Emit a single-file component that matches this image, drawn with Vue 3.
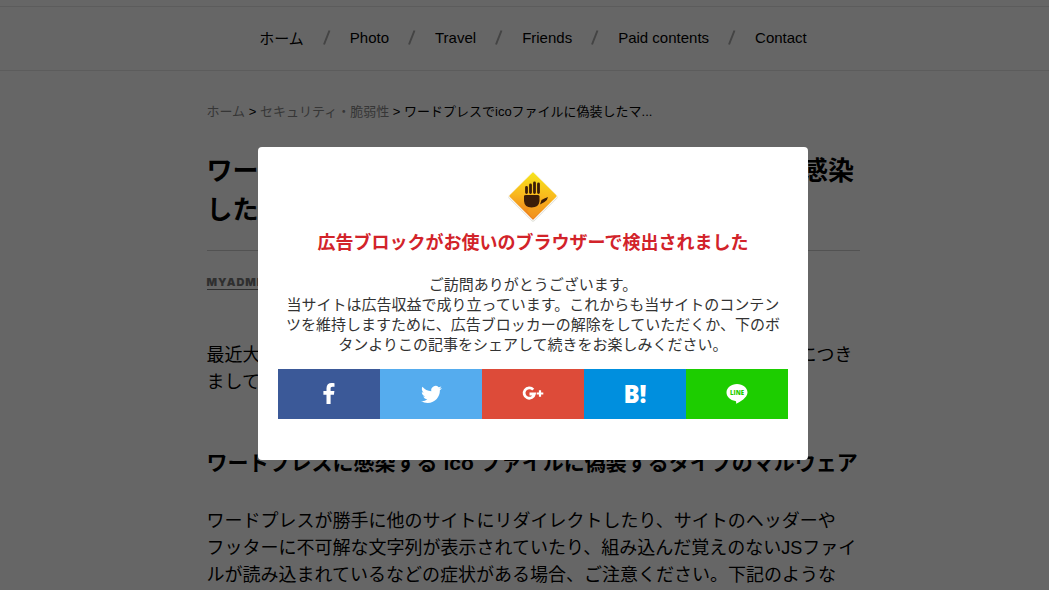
<script setup>
const navItems = ['ホーム', 'Photo', 'Travel', 'Friends', 'Paid contents', 'Contact']
const messageLines = [
  'ご訪問ありがとうございます。',
  '当サイトは広告収益で成り立っています。これからも当サイトのコンテン',
  'ツを維持しますために、広告ブロッカーの解除をしていただくか、下のボ',
  'タンよりこの記事をシェアして続きをお楽しみください。',
]
</script>

<template>
  <div class="page">
    <nav class="site-nav" aria-label="メインメニュー">
      <template v-for="(item, i) in navItems" :key="item">
        <span v-if="i" class="slash" aria-hidden="true">
          <svg width="8" height="15" viewBox="0 0 8 15"><path d="M1 14.5 6.5 .5" stroke="#aaa" stroke-width="2" /></svg>
        </span>
        <a href="#">{{ item }}</a>
      </template>
    </nav>

    <main class="article">
      <div class="breadcrumb">
        <a href="#">ホーム</a> &gt; <a href="#">セキュリティ・脆弱性</a> &gt; ワードプレスでicoファイルに偽装したマ...
      </div>
      <h1>ワードプレスで<span class="latin">ico</span>ファイルに偽装したマルウェア感染<br>した時の対処法</h1>
      <div class="meta"><a href="#">MYADMIN</a></div>
      <p class="lead">最近大きな問題となっているワードプレスマルウェア感染の被害と対処法につき<br>まして、ご紹介します。</p>
      <h2>ワードプレスに感染する<span class="latin">ico</span>ファイルに偽装するタイプのマルウェア</h2>
      <p>ワードプレスが勝手に他のサイトにリダイレクトしたり、サイトのヘッダーや<br>フッターに不可解な文字列が表示されていたり、組み込んだ覚えのないJSファイ<br>ルが読み込まれているなどの症状がある場合、ご注意ください。下記のような</p>
    </main>

    <div class="overlay">
      <section class="modal" role="dialog" aria-modal="true" aria-labelledby="notice-title">
        <svg class="sign" width="54" height="54" viewBox="0 0 54 54" aria-hidden="true">
          <defs>
            <linearGradient id="sign-fill" x1="0.1" y1="0" x2="0.9" y2="1">
              <stop offset="0" stop-color="#f6e11c" />
              <stop offset="0.5" stop-color="#f9b81d" />
              <stop offset="1" stop-color="#ec7a1d" />
            </linearGradient>
          </defs>
          <rect x="9" y="10" width="36" height="36" rx="2" transform="rotate(45 27 28)" fill="#deded6" />
          <rect x="9" y="9" width="36" height="36" rx="2" transform="rotate(45 27 27)" fill="#fbfbf7" />
          <rect x="10" y="10" width="34" height="34" rx="1" transform="rotate(45 27 27)" fill="url(#sign-fill)" />
          <path d="M21 42C26 35 34 31 43 31L46 31 28 49Q27 50 26 49Z" fill="#f5a81d" opacity=".5" />
          <path d="M20.500 18.500V23.500M24.500 16V23.500M28.500 14V23.500M32.500 15V23.500" fill="none" stroke="#3b1d08" stroke-width="2.800" stroke-linecap="round" />
          <path d="M18 27Q18 26 20 26H32Q33.500 26 33.500 27.500V32Q33 38.500 25.500 38.500Q18.500 38.500 18 32Z" fill="#3b1d08" />
          <path d="M34 35.500 35.500 31Q38 29.500 42 28Q41.500 31.500 38.500 33Z" fill="#3b1d08" />
        </svg>
        <h3 id="notice-title">広告ブロックがお使いのブラウザーで検出されました</h3>
        <p class="message"><span v-for="line in messageLines" :key="line">{{ line }}</span></p>
        <div class="share">
          <button type="button" class="facebook" aria-label="Facebook">
            <svg width="12" height="22" viewBox="0 0 12 22"><path fill="#fff" d="M11.500 .3V3.800H9.500C7.900 3.800 7.600 4.600 7.600 5.700V8H11.400L10.900 11.700H7.600V21H3.500V11.700H.4V8H3.500V5.200C3.500 2 5.500 .1 8.500 .1 9.900 .1 11.100 .2 11.500 .3Z" /></svg>
          </button>
          <button type="button" class="twitter" aria-label="Twitter">
            <svg width="21" height="21" viewBox="0 0 24 24"><path fill="#fff" d="M23.953 4.570a10 10 0 0 1-2.825.775 4.958 4.958 0 0 0 2.163-2.723c-.951.555-2.005.959-3.127 1.184a4.920 4.920 0 0 0-8.384 4.482C7.690 8.095 4.067 6.130 1.640 3.162a4.822 4.822 0 0 0-.666 2.475c0 1.710.870 3.213 2.188 4.096a4.904 4.904 0 0 1-2.228-.616v.060a4.923 4.923 0 0 0 3.946 4.827 4.996 4.996 0 0 1-2.212.085 4.936 4.936 0 0 0 4.604 3.417 9.867 9.867 0 0 1-6.102 2.105c-.390 0-.779-.023-1.170-.067a13.995 13.995 0 0 0 7.557 2.209c9.053 0 13.998-7.496 13.998-13.985 0-.210 0-.420-.015-.630A9.935 9.935 0 0 0 24 4.590z" /></svg>
          </button>
          <button type="button" class="google" aria-label="Google+">
            <svg width="22" height="16" viewBox="0 0 22 16" fill="none" stroke="#fff"><path stroke-width="2.800" d="M11.200 3.600A5.200 5.200 0 1 0 12.400 8H7.500" /><path stroke-width="2.200" d="M18 4.200V10.800M14.700 7.500H21.300" /></svg>
          </button>
          <button type="button" class="hatena" aria-label="はてなブックマーク">B!</button>
          <button type="button" class="line" aria-label="LINE">
            <svg width="22" height="20" viewBox="0 0 22 20"><path fill="#fff" d="M11 0C5.200 0 .5 3.800 .5 8.500C.5 12.700 4.200 16.200 9.300 16.900C10.300 17.100 10.300 17.500 10.100 19.700C14 18.200 21.500 13.500 21.500 8.500C21.500 3.800 16.800 0 11 0Z" /><text x="11" y="11" text-anchor="middle">LINE</text></svg>
          </button>
        </div>
      </section>
    </div>
  </div>
</template>

<style>
body {
  margin: 0;
  background: #fff;
}
</style>

<style scoped>
.page {
  height: 100vh;
  overflow: hidden;
  box-sizing: border-box;
  padding: 6px 0 0;
  color: #000;
  font-family: "Liberation Sans", "Noto Sans CJK JP", sans-serif;
}
h1, h2, h3, p {
  margin: 0;
}
.site-nav {
  display: flex;
  justify-content: center;
  align-items: center;
  gap: 19px;
  height: 61px;
  padding: 0 0 2px 17px;
  border-top: 1px solid #e5e5e5;
  border-bottom: 1px solid #e5e5e5;
  font-size: 15px;
  white-space: nowrap;
}
.site-nav a {
  color: #000;
  text-decoration: none;
}
.slash {
  display: flex;
}
.article {
  max-width: 653px;
  margin: 0 auto;
  padding: 31px 0 0 17px;
  white-space: nowrap;
}
.breadcrumb {
  font-size: 13px;
  line-height: 20px;
}
.breadcrumb a {
  color: #888;
  text-decoration: none;
}
.latin {
  margin: 0 6px;
}
h1 {
  padding: 30px 0 20px;
  border-bottom: 1px solid #ccc;
  font-size: 26px;
  line-height: 39px;
}
.meta {
  margin: 24px 0 52px;
  font: 900 11px/15px Inter, "Open Sans", sans-serif;
}
.meta a {
  color: #777;
  letter-spacing: 1px;
  text-decoration: none;
  border-bottom: 1px solid #777;
}
.article p {
  font-size: 18px;
  line-height: 27px;
}
h2 {
  margin: 50px 0 29px;
  font-size: 21px;
  line-height: 33px;
}
.overlay {
  position: fixed;
  inset: 0;
  display: flex;
  justify-content: center;
  align-items: flex-start;
  padding: 147px 0 0 17px;
  background: rgba(0, 0, 0, 0.6);
}
.modal {
  box-sizing: border-box;
  width: 550px;
  max-width: 100%;
  padding: 22px 20px 41px;
  border-radius: 4px;
  background: #fff;
  text-align: center;
}
.sign {
  display: block;
  margin: 0 auto 8px;
}
h3 {
  color: #d2232a;
  font-size: 18px;
  line-height: 24px;
  white-space: nowrap;
}
.message {
  margin: 20px 0 14px;
  color: #333;
  font-size: 15px;
  line-height: 20px;
  white-space: nowrap;
}
.message span {
  display: block;
}
.share {
  display: grid;
  grid-template-columns: repeat(5, 1fr);
}
.share button {
  display: flex;
  justify-content: center;
  align-items: center;
  height: 50px;
  padding: 0;
  border: 0;
  color: #fff;
  cursor: pointer;
}
.facebook { background: #3b5998; }
.twitter { background: #55acee; }
.google { background: #dd4b39; }
.hatena {
  background: #008fde;
  font: 800 24px/24px "Open Sans", sans-serif;
}
.line { background: #1dcd00; }
.line text {
  fill: #1dcd00;
  font: 800 6px "Open Sans", sans-serif;
}
</style>
